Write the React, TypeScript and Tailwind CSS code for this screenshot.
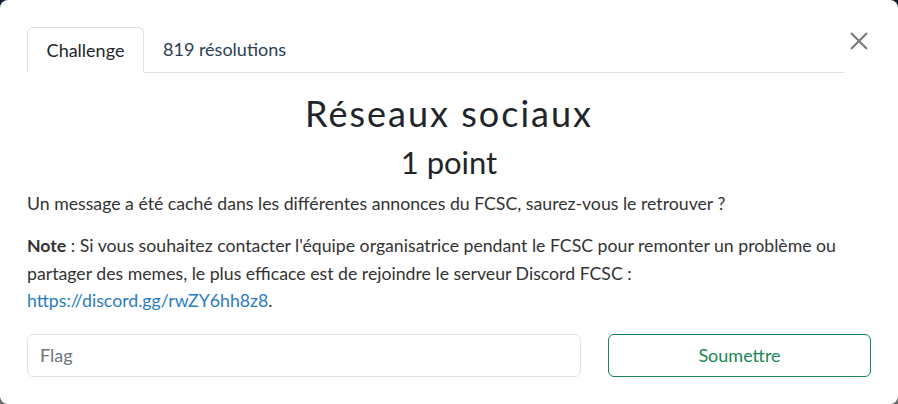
import React from "react";

export default function App() {
  return (
    <div
      className="w-[898px] h-[404px] overflow-hidden bg-gradient-to-b from-[#0b1a2e] to-[#6b6b6b]"
      style={{ fontFamily: "Lato, 'Noto Sans', sans-serif" }}
    >
      <div className="w-[898px] h-[404px] bg-white rounded-[8px] relative px-[27px] pt-[27px]">
        <button className="absolute right-[29px] top-[31px] w-[20px] h-[20px] text-[#777]">
          <svg viewBox="0 0 20 20" width="20" height="20" stroke="currentColor" strokeWidth="2" fill="none">
            <path d="M2 2 L18 18 M18 2 L2 18" />
          </svg>
        </button>
        <div className="flex w-[817px] border-b border-[#dee2e6] h-[46px]">
          <div className="w-[117px] h-[46px] border border-[#dee2e6] border-b-white rounded-t-[6px] bg-white flex items-center justify-center text-[18px] text-[#212529] -mb-px">
            Challenge
          </div>
          <div className="px-[19px] h-[45px] flex items-center text-[18px] text-[#2c3e50]">
            819 résolutions
          </div>
        </div>
        <h1 className="text-center text-[36px] leading-[43px] tracking-[2px] text-[#212529] mt-[19px]">
          Réseaux sociaux
        </h1>
        <h2 className="text-center text-[31px] leading-[38px] text-[#212529] mt-[8px]">
          1 point
        </h2>
        <p className="text-[17.7px] leading-[27px] text-[#333] mt-[9px]">
          Un message a été caché dans les différentes annonces du FCSC, saurez-vous le retrouver ?
        </p>
        <p className="text-[17.7px] leading-[27.5px] text-[#333] mt-[15px]">
          <strong className="font-bold">Note</strong> : Si vous souhaitez contacter l'équipe organisatrice pendant le FCSC pour remonter un problème ou partager des memes, le plus efficace est de rejoindre le serveur Discord FCSC :{" "}
          <a className="text-[#2a7cc1]">https://discord.gg/rwZY6hh8z8</a>.
        </p>
        <div className="flex gap-[27px] mt-[19px]">
          <input
            placeholder="Flag"
            className="w-[554px] h-[43px] border border-[#dee2e6] rounded-[6px] px-[12px] text-[18px] text-[#212529] placeholder:text-[#6c757d] outline-none"
          />
          <button className="flex-1 h-[43px] border border-[#198754] rounded-[6px] text-[18px] text-[#198754] bg-white">
            Soumettre
          </button>
        </div>
      </div>
    </div>
  );
}
